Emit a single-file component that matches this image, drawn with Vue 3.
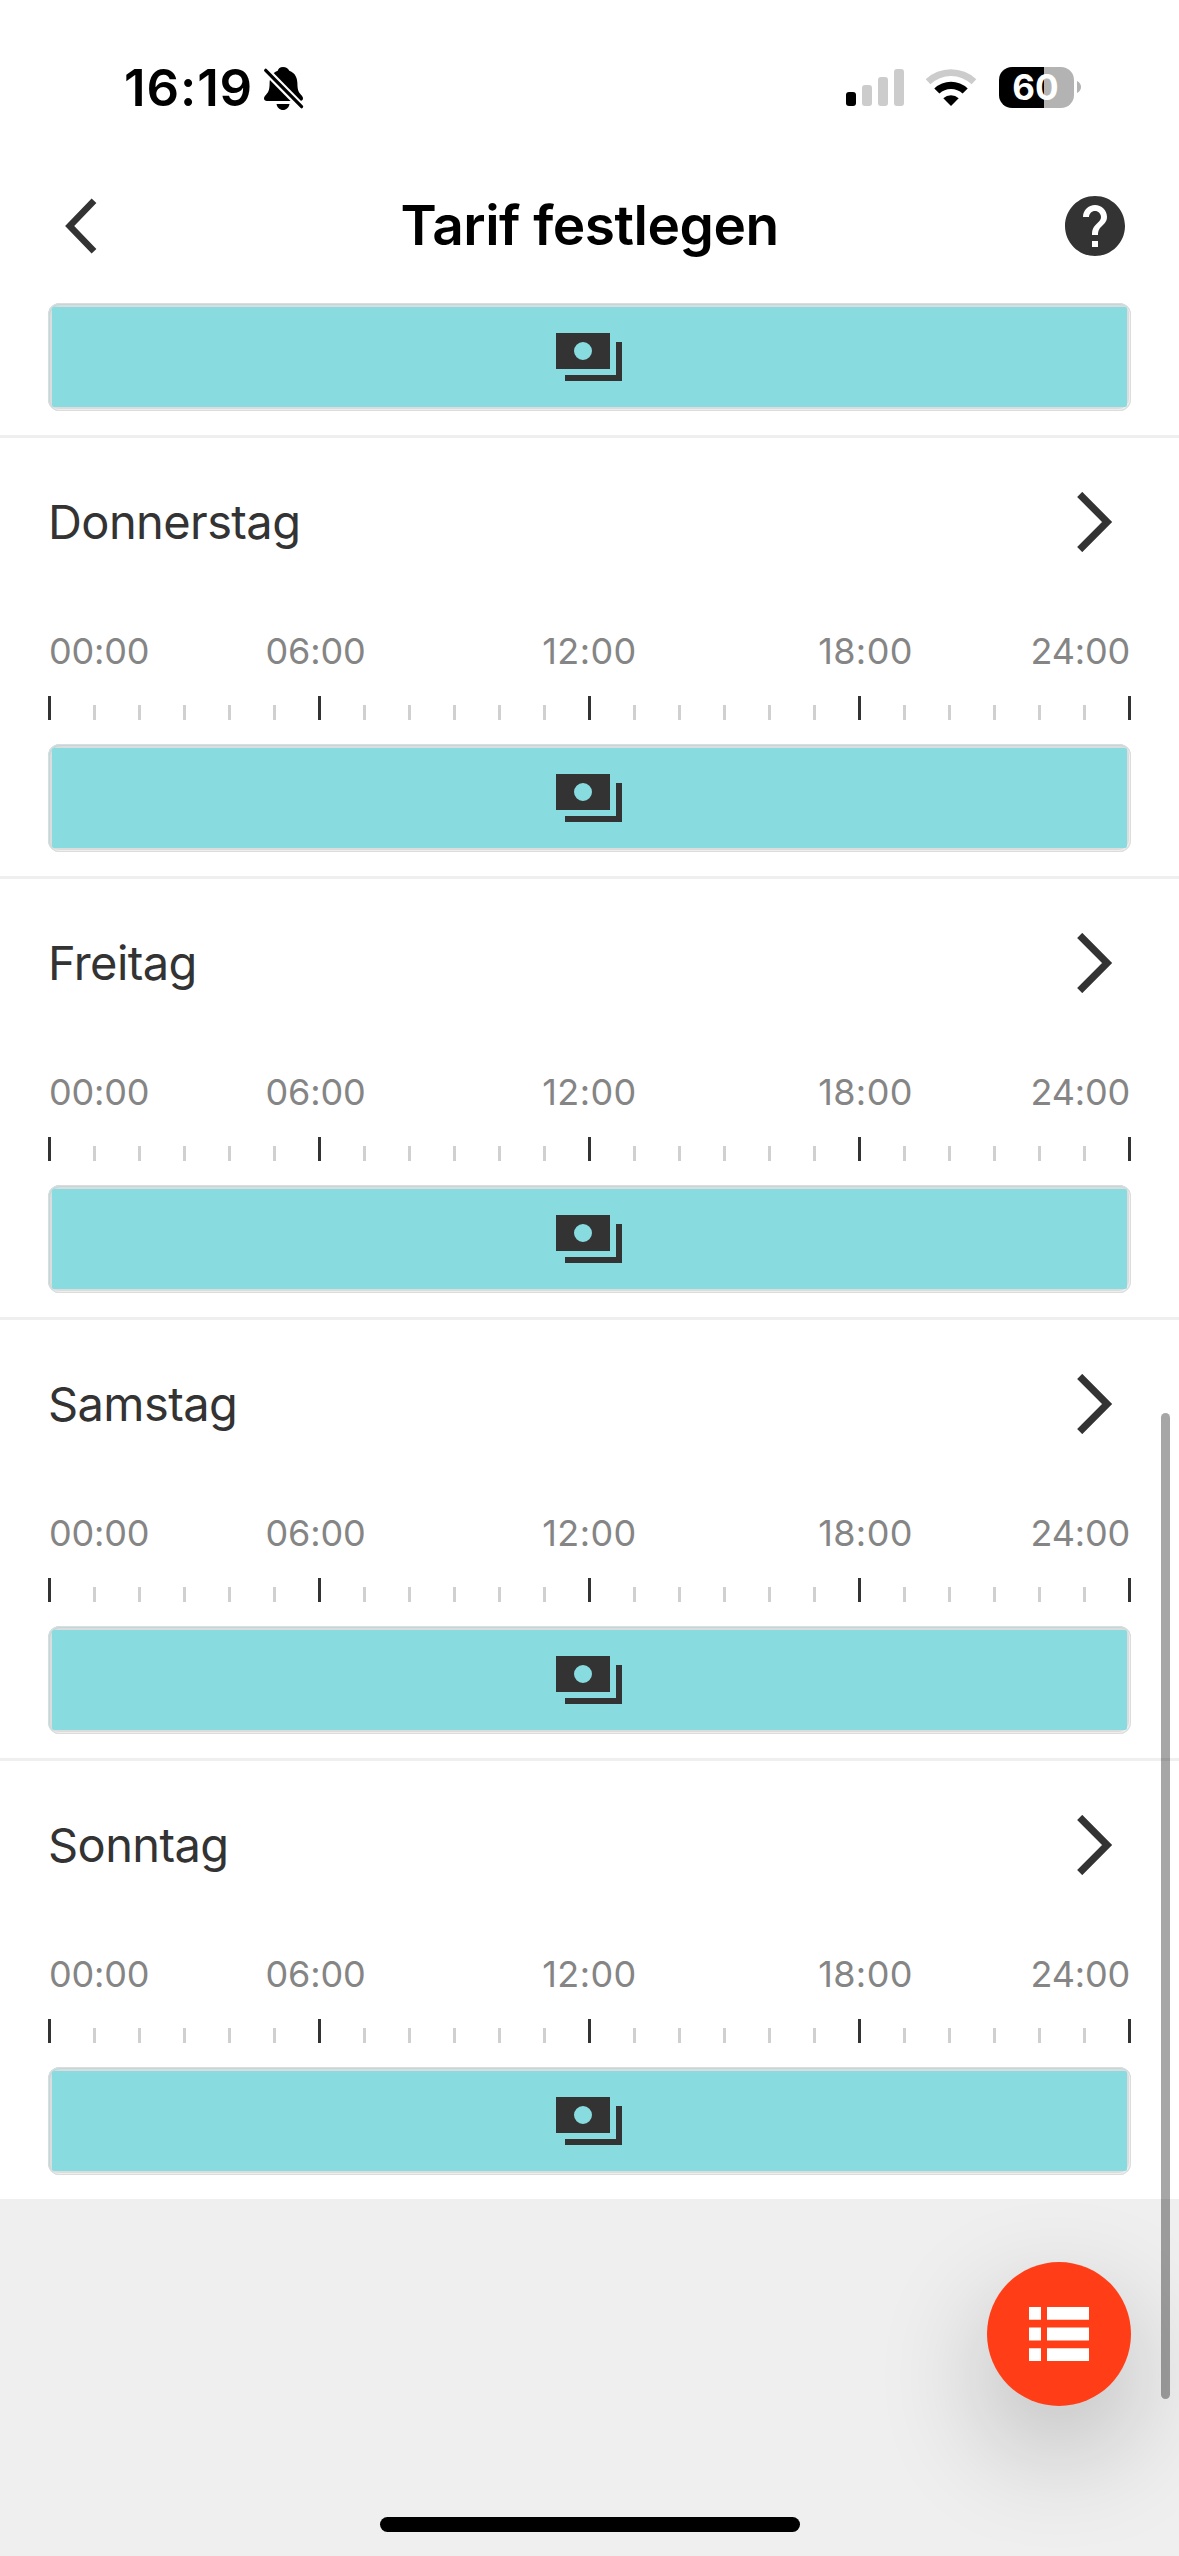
<script setup>
const days = ['Donnerstag', 'Freitag', 'Samstag', 'Sonntag']
const hours = ['00:00', '06:00', '12:00', '18:00', '24:00']
</script>

<template>
  <div class="screen">
    <header class="status">
      <div class="clock">
        <span class="time">16:19</span>
        <svg class="bell" width="42" height="46" viewBox="262 66 42 46">
          <path d="M283 67c-3 0-4.600 1.500-5.300 3.700C271.500 73 269.700 78 269.600 83.500c-.1 5.500-.6 8-3.600 11.300-1.400 1.500-2 2.500-2 3.700 0 1.600 1.200 2.500 2.900 2.500h33.200c1.700 0 2.900-.9 2.900-2.500 0-1.200-.6-2.200-2-3.700-3-3.300-3.500-5.800-3.600-11.300-.1-5.500-1.900-10.500-8.100-12.800C288.300 68.500 286 67 283 67z" />
          <path d="M276.500 104h13c-.6 3.500-3.200 6-6.500 6s-5.900-2.500-6.500-6z" />
          <path d="M263.600 68.200l40 40.700" stroke="#fff" stroke-width="7.600" />
          <path d="M265.700 70.300l35.900 36.400" stroke="#000" stroke-width="3.200" stroke-linecap="round" />
        </svg>
      </div>
      <div class="indicators">
        <svg class="signal" width="58" height="37" viewBox="0 0 58 37">
          <rect x="0" y="23" width="10" height="14" rx="3" fill="#000" />
          <rect x="16" y="16" width="10" height="21" rx="3" fill="#ccc" />
          <rect x="32" y="8" width="10" height="29" rx="3" fill="#ccc" />
          <rect x="48" y="0" width="10" height="37" rx="3" fill="#ccc" />
        </svg>
        <svg class="wifi" width="52" height="38" viewBox="-26 -37 52 38">
          <path fill="#ccc" d="M-25.300-26.800a37 37 0 0 1 50.600 0L20.600-21.800a30 30 0 0 0-41.200 0z" />
          <path d="M-16.700-17.500a24.300 24.300 0 0 1 33.400 0L11.600-12.400a17 17 0 0 0-23.200 0z" />
          <path d="M-7.700-7.800a11.500 11.500 0 0 1 15.400 0L0 0z" />
        </svg>
        <div class="battery"><span class="level">60</span></div>
        <svg class="nub" width="4" height="12" viewBox="0 0 4 12"><path fill="#b3b3b3" d="M0 0c2.500 1 4 3.400 4 6s-1.500 5-4 6z" /></svg>
      </div>
    </header>

    <nav class="nav">
      <svg class="back" width="36" height="60" viewBox="0 0 36 60">
        <path d="M31 4.800L6.700 30 31 55.200" fill="none" stroke="#333" stroke-width="6.600" />
      </svg>
      <h1 class="title">Tarif festlegen</h1>
      <svg class="help" width="72" height="72" viewBox="0 0 24 24">
        <path fill="#333" d="M12 2C6.480 2 2 6.480 2 12s4.480 10 10 10 10-4.480 10-10S17.520 2 12 2zm1 17h-2v-2h2v2zm2.070-7.750l-.9.920C13.450 12.900 13 13.500 13 15h-2v-.5c0-1.100.45-2.100 1.170-2.830l1.240-1.260c.37-.36.59-.86.59-1.410 0-1.100-.9-2-2-2s-2 .9-2 2H8c0-2.210 1.790-4 4-4s4 1.790 4 4c0 .88-.36 1.680-.93 2.250z" />
      </svg>
    </nav>

    <main>
      <section v-for="day in ['', ...days]" :key="day" class="day">
        <template v-if="day">
          <div class="head">
            <h2 class="name">{{ day }}</h2>
            <svg width="36" height="60" viewBox="0 0 36 60">
              <path d="M2.700 2.400L30.100 30 2.700 57.600" fill="none" stroke="#333" stroke-width="7.200" />
            </svg>
          </div>
          <div class="hours">
            <span v-for="h in hours" :key="h" class="hour" :class="{ wide: h[0] === '1' }">{{ h }}</span>
          </div>
          <div class="ticks">
            <i v-for="n in 25" :key="n" class="tick" :class="{ major: (n - 1) % 6 === 0 }"></i>
          </div>
        </template>
        <div class="bar">
          <div class="fill">
            <svg width="66" height="48" viewBox="0 0 66 48">
              <path fill="#333" fill-rule="evenodd" d="M0 0h54v36H0zM27 9a9 9 0 1 0 0 18 9 9 0 0 0 0-18zM60 9h6v39H9v-6h51z" />
            </svg>
          </div>
        </div>
      </section>
    </main>

    <footer class="bottom">
      <button class="fab" aria-label="Liste">
        <svg width="60" height="54" viewBox="0 0 60 54">
          <path fill="#fff" d="M0 0h12v12.700H0zM18 0h42v12.700H18zM0 20.500h12v13H0zM18 20.500h42v13H18zM0 41.300h12V54H0zM18 41.300h42V54H18z" />
        </svg>
      </button>
      <div class="home"></div>
    </footer>
    <div class="scrollbar"></div>
  </div>
</template>

<style>
body { margin: 0; background: #fff; }
</style>

<style scoped>
.screen {
  position: relative;
  display: flex;
  flex-direction: column;
  width: 1179px;
  height: 2556px;
  overflow: hidden;
  background: #fff;
  color: #000;
  font-family: Inter, "Liberation Sans", sans-serif;
}
.status {
  display: flex;
  justify-content: space-between;
  height: 174px;
  box-sizing: border-box;
  padding: 66px 98px 0 124px;
}
.clock { display: flex; align-items: flex-start; }
.time {
  width: 138px;
  font-size: 51px;
  line-height: 44px;
  font-weight: 600;
  letter-spacing: 0.9px;
  white-space: nowrap;
}
.indicators { display: flex; align-items: flex-start; }
.signal { margin-top: 3px; }
.wifi { margin: 3px 0 0 21px; }
.battery {
  display: flex;
  align-items: center;
  justify-content: center;
  width: 75px;
  height: 41px;
  margin: 1px 0 0 22px;
  border-radius: 13px;
  background: linear-gradient(to right, #000 45px, #b3b3b3 45px);
}
.level {
  margin-right: 2px;
  color: #fff;
  font-size: 35px;
  line-height: 41px;
  font-weight: 700;
  letter-spacing: 0;
}
.nub { margin: 15px 0 0 3px; }
.nav {
  display: flex;
  align-items: center;
  justify-content: space-between;
  height: 104px;
  padding: 0 48px 0 63px;
}
.title {
  margin: 0 0 2px 21px;
  font-size: 55px;
  line-height: 66px;
  font-weight: 600;
  letter-spacing: -0.5px;
  white-space: nowrap;
}
.day {
  padding: 0 48px 24px;
  border-bottom: 3px solid #efefef;
}
.day:first-child { padding-top: 25px; }
.day:last-child { border-bottom: 0; }
.head {
  display: flex;
  align-items: center;
  justify-content: space-between;
  height: 168px;
  padding-right: 18px;
}
.name {
  margin: 0;
  color: #333;
  font-size: 47px;
  line-height: 60px;
  font-weight: 400;
  letter-spacing: -0.6px;
}
.hours {
  display: grid;
  grid-template-columns: 130px 275px 273px 279px 126px;
  height: 90px;
  align-items: center;
}
.hour {
  color: #858585;
  font-size: 36px;
  line-height: 44px;
  letter-spacing: -0.2px;
  text-align: center;
}
.hour.wide { letter-spacing: 0.4px; }
.hour:first-child { padding-left: 1px; text-align: left; }
.hour:last-child { padding-right: 1px; text-align: right; }
.ticks {
  display: flex;
  align-items: flex-end;
  justify-content: space-between;
  height: 24px;
  margin-bottom: 24px;
}
.tick { width: 3px; height: 15px; background: #d0d0d0; }
.tick.major { height: 24px; background: #333; }
.bar {
  height: 108px;
  box-sizing: border-box;
  padding: 4px;
  border-radius: 12px;
  background: #dcdcdc;
  box-shadow: inset 0 0 0 1px #dcdcdc, inset 1px 1px 0 1px #bcdadc, inset -1px -1px 0 1px #eee;
}
.fill {
  display: flex;
  align-items: center;
  justify-content: center;
  height: 100px;
  padding-right: 1px;
  border-radius: 2px;
  background: #88dbdf;
}
.bottom {
  position: relative;
  flex: 1;
  display: flex;
  flex-direction: column;
  align-items: center;
  justify-content: space-between;
  box-sizing: border-box;
  padding: 63px 0 24px;
  overflow: hidden;
  background: #efefef;
}
.fab {
  display: flex;
  align-items: center;
  justify-content: center;
  align-self: flex-end;
  width: 144px;
  height: 144px;
  margin: 0 48px 0 0;
  padding: 0;
  border: 0;
  border-radius: 50%;
  background: #ff3e17;
  box-shadow: 0 42px 114px rgba(0, 0, 0, 0.24);
}
.home { width: 420px; height: 15px; border-radius: 8px; background: #000; }
.scrollbar {
  position: absolute;
  right: 9px;
  top: 1413px;
  width: 9px;
  height: 986px;
  border-radius: 5px;
  background: rgba(0, 0, 0, 0.35);
}
</style>
